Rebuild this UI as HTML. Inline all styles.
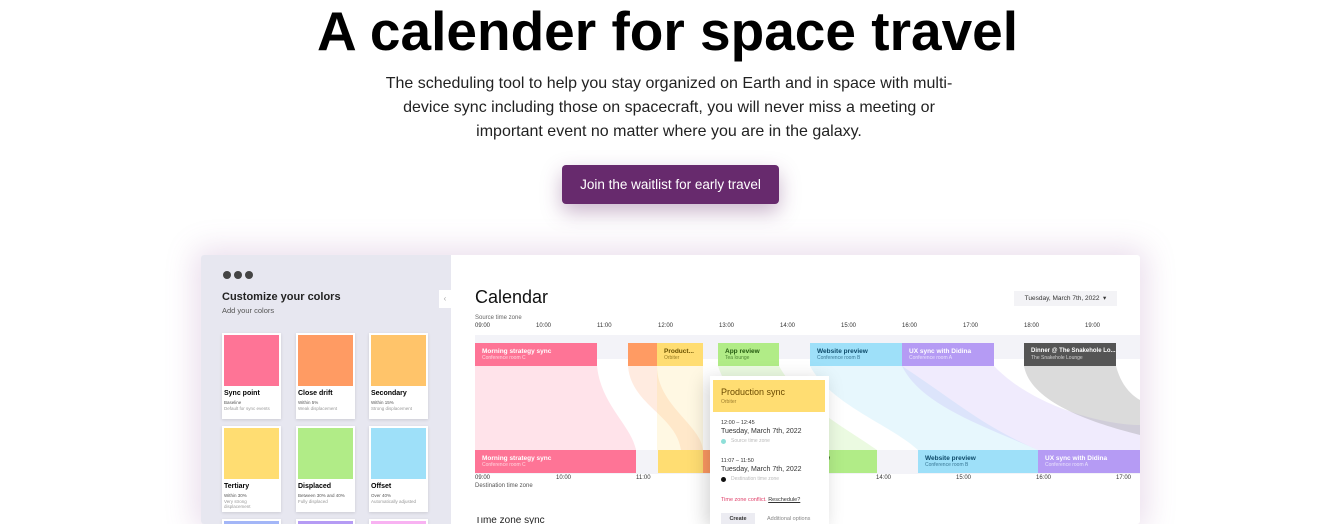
<!DOCTYPE html>
<html><head><meta charset="utf-8"><style>
*{margin:0;padding:0;box-sizing:border-box}
html,body{width:1335px;height:524px;overflow:hidden}
body{background:#fff;font-family:"Liberation Sans",Arial,sans-serif;position:relative;color:#000}
.a{position:absolute}
h1{position:absolute;left:0;width:1335px;top:0px;text-align:center;font-size:55px;font-weight:bold;line-height:62px}
.p{position:absolute;left:376px;width:586px;top:72px;text-align:center;font-size:16px;line-height:24px;color:#222}
.btn{position:absolute;left:562px;top:165px;width:217px;height:39px;background:#672a6d;color:#fff;border-radius:4px;font-size:13.5px;line-height:39px;text-align:center;box-shadow:0 8px 20px rgba(103,42,109,.35)}
.frame{position:absolute;left:201px;top:255px;width:939px;height:269px;background:#fff;box-shadow:0 0 30px 6px rgba(160,100,170,.22);overflow:hidden;border-radius:3px}
.left{position:absolute;left:0;top:0;width:250px;height:100%;background:#e7e7f0;overflow:hidden}
.dot{position:absolute;top:16px;width:8px;height:8px;border-radius:50%;background:#444}
.card{position:absolute;width:59px;height:86px;background:#fff;box-shadow:0 1px 3px rgba(0,0,0,.12)}
.card .sw{position:absolute;left:2px;top:2px;width:55px;height:51px}
.card b{position:absolute;left:2px;top:57px;font-size:7px}
.card i{position:absolute;left:2px;top:67px;font-size:4.5px;font-style:normal;color:#555;line-height:6px}
.card s{position:absolute;left:2px;top:73px;font-size:4.5px;text-decoration:none;color:#999;line-height:5px;width:50px}
.tl{position:absolute;font-size:6px;color:#333}
.ev{position:absolute;height:23px;font-size:6.5px;font-weight:bold;padding:5px 0 0 7px;color:#fff;line-height:7px;white-space:nowrap;overflow:hidden}
.ev span{display:block;font-weight:normal;font-size:5px;opacity:.7}
</style></head><body>
<h1>A calender for space travel</h1>
<div class="p">The scheduling tool to help you stay organized on Earth and in space with multi-device sync including those on spacecraft, you will never miss a meeting or important event no matter where you are in the galaxy.</div>
<div class="btn">Join the waitlist for early travel</div>
<div class="frame">
 <div class="left">
  <div class="dot" style="left:22px"></div><div class="dot" style="left:33px"></div><div class="dot" style="left:44px"></div>
  <div class="a" style="left:21px;top:36px;font-size:11px;font-weight:bold;color:#222">Customize your colors</div>
  <div class="a" style="left:21px;top:51px;font-size:7.5px;color:#555">Add your colors</div>
  <div class="card" style="left:21px;top:78px"><div class="sw" style="background:#fe7496"></div><b>Sync point</b><i>Baseline</i><s>Default for sync events</s></div>
  <div class="card" style="left:95px;top:78px"><div class="sw" style="background:#ff9b63"></div><b>Close drift</b><i>Within 5%</i><s>Weak displacement</s></div>
  <div class="card" style="left:168px;top:78px"><div class="sw" style="background:#ffc46a"></div><b>Secondary</b><i>Within 15%</i><s>Strong displacement</s></div>
  <div class="card" style="left:21px;top:171px"><div class="sw" style="background:#ffdd72"></div><b>Tertiary</b><i>Within 30%</i><s>Very strong displacement</s></div>
  <div class="card" style="left:95px;top:171px"><div class="sw" style="background:#b1ec87"></div><b>Displaced</b><i>Between 30% and 40%</i><s>Fully displaced</s></div>
  <div class="card" style="left:168px;top:171px"><div class="sw" style="background:#9ee0f9"></div><b>Offset</b><i>Over 40%</i><s>Automatically adjusted</s></div>
  <div class="card" style="left:21px;top:264px;height:5px"><div class="sw" style="background:#a3b6f7;height:3px"></div></div>
  <div class="card" style="left:95px;top:264px;height:5px"><div class="sw" style="background:#b59bf4;height:3px"></div></div>
  <div class="card" style="left:168px;top:264px;height:5px"><div class="sw" style="background:#f8b2f2;height:3px"></div></div>
  <div class="a" style="left:238px;top:35px;width:12px;height:18px;background:#fff;font-size:8px;color:#aaa;text-align:center;line-height:18px">‹</div>
 </div>
 <div class="a" style="left:274px;top:32px;font-size:18px;color:#111">Calendar</div>
 <div class="a" style="left:813px;top:36px;width:103px;height:15px;background:#f3f3f6;font-size:6.5px;line-height:15px;text-align:center;color:#333">Tuesday, March 7th, 2022 &nbsp;▾</div>
 <div class="tl" style="left:274px;top:60px;color:#666">Source time zone</div>
 <div class="tl" style="left:274px;top:68px">09:00</div><div class="tl" style="left:335px;top:68px">10:00</div><div class="tl" style="left:396px;top:68px">11:00</div><div class="tl" style="left:457px;top:68px">12:00</div><div class="tl" style="left:518px;top:68px">13:00</div><div class="tl" style="left:579px;top:68px">14:00</div><div class="tl" style="left:640px;top:68px">15:00</div><div class="tl" style="left:701px;top:68px">16:00</div><div class="tl" style="left:762px;top:68px">17:00</div><div class="tl" style="left:823px;top:68px">18:00</div><div class="tl" style="left:884px;top:68px">19:00</div>
 <svg class="a" style="left:0;top:0" width="939" height="269">
  <rect x="274" y="80" width="665" height="24" fill="#f3f3f8"/>
  <rect x="274" y="195" width="665" height="24" fill="#f3f3f8"/>
  <path d="M274 111 H396 C400 150 430 170 435 195 H274Z" fill="#fe7496" opacity=".2"/>
  <path d="M427 111 H456 C456 150 500 170 502 195 H480 C475 160 430 150 427 111Z" fill="#ff9b63" opacity=".2"/>
  <path d="M456 111 H502 V195 H456Z" fill="#ffdd72" opacity=".2"/>
  <path d="M517 111 H578 C600 150 640 170 676 195 H580 C560 160 530 150 517 111Z" fill="#b1ec87" opacity=".25"/>
  <path d="M609 111 H701 C760 150 780 170 837 195 H717 C690 170 630 150 609 111Z" fill="#9ee0f9" opacity=".25"/>
  <path d="M701 111 H793 C830 150 900 170 939 170 V195 H837 C780 170 720 150 701 111Z" fill="#b59bf4" opacity=".2"/>
  <path d="M823 111 H915 C920 130 930 140 939 145 V180 C900 170 830 150 823 111Z" fill="#888" opacity=".3"/>
 </svg>
 <div class="ev" style="left:274px;top:88px;width:122px;background:#fe7496">Morning strategy sync<span>Conference room C</span></div>
 <div class="ev" style="left:427px;top:88px;width:29px;background:#ff9b63"></div>
 <div class="ev" style="left:456px;top:88px;width:46px;background:#ffdd72;color:#6b5200">Product...<span>Orbiter</span></div>
 <div class="ev" style="left:517px;top:88px;width:61px;background:#b1ec87;color:#245a10">App review<span>Tea lounge</span></div>
 <div class="ev" style="left:609px;top:88px;width:92px;background:#9ee0f9;color:#0d4a6a">Website preview<span>Conference room B</span></div>
 <div class="ev" style="left:701px;top:88px;width:92px;background:#b59bf4">UX sync with Didina<span>Conference room A</span></div>
 <div class="ev" style="left:823px;top:88px;width:92px;background:#555;font-size:6px">Dinner @ The Snakehole Lo...<span>The Snakehole Lounge</span></div>
 <div class="ev" style="left:274px;top:195px;width:161px;background:#fe7496">Morning strategy sync<span>Conference room C</span></div>
 <div class="ev" style="left:457px;top:195px;width:45px;background:#ffdd72"></div>
 <div class="ev" style="left:502px;top:195px;width:10px;background:#ff9b63"></div>
 <div class="ev" style="left:579px;top:195px;width:97px;background:#b1ec87;color:#245a10;padding-left:45px">w</div>
 <div class="ev" style="left:717px;top:195px;width:120px;background:#9ee0f9;color:#0d4a6a">Website preview<span>Conference room B</span></div>
 <div class="ev" style="left:837px;top:195px;width:102px;background:#b59bf4">UX sync with Didina<span>Conference room A</span></div>
 <div class="tl" style="left:274px;top:220px">09:00</div><div class="tl" style="left:355px;top:220px">10:00</div><div class="tl" style="left:435px;top:220px">11:00</div><div class="tl" style="left:675px;top:220px">14:00</div><div class="tl" style="left:755px;top:220px">15:00</div><div class="tl" style="left:835px;top:220px">16:00</div><div class="tl" style="left:915px;top:220px">17:00</div>
 <div class="tl" style="left:274px;top:228px;color:#555">Destination time zone</div>
 <div class="a" style="left:274px;top:262px;font-size:10px;color:#222;line-height:7px;overflow:hidden;height:7px">Time zone sync</div>
 <div class="a" style="left:509px;top:121px;width:119px;height:148px;background:#fff;box-shadow:-4px 4px 18px rgba(0,0,0,.18);overflow:hidden">
  <div class="a" style="left:3px;top:4px;width:112px;height:32px;background:#ffdd72;padding:7px 0 0 8px;font-size:9px;color:#6b4a00">Production sync<div style="font-size:5px;color:#a08030;margin-top:2px">Orbiter</div></div>
  <div class="a" style="left:11px;top:44px;font-size:5.5px;color:#333">12:00 – 12:45</div>
  <div class="a" style="left:11px;top:52px;font-size:7px;color:#333">Tuesday, March 7th, 2022</div>
  <div class="a" style="left:11px;top:63px;width:5px;height:5px;border-radius:50%;background:#8edfd8"></div>
  <div class="a" style="left:21px;top:62px;font-size:5px;color:#bbb">Source time zone</div>
  <div class="a" style="left:11px;top:82px;font-size:5.5px;color:#333">11:07 – 11:50</div>
  <div class="a" style="left:11px;top:90px;font-size:7px;color:#333">Tuesday, March 7th, 2022</div>
  <div class="a" style="left:11px;top:101px;width:5px;height:5px;border-radius:50%;background:#111"></div>
  <div class="a" style="left:21px;top:100px;font-size:5px;color:#bbb">Destination time zone</div>
  <div class="a" style="left:11px;top:121px;font-size:5.5px;color:#e0406a;white-space:nowrap">Time zone conflict. <span style="color:#333;text-decoration:underline">Reschedule?</span></div>
  <div class="a" style="left:11px;top:137px;width:34px;height:11px;background:#ececf2;font-size:5.5px;text-align:center;line-height:12px;font-weight:bold;color:#333">Create</div>
  <div class="a" style="left:57px;top:140px;font-size:5.5px;color:#888">Additional options</div>
 </div>
</div>
</body></html>
